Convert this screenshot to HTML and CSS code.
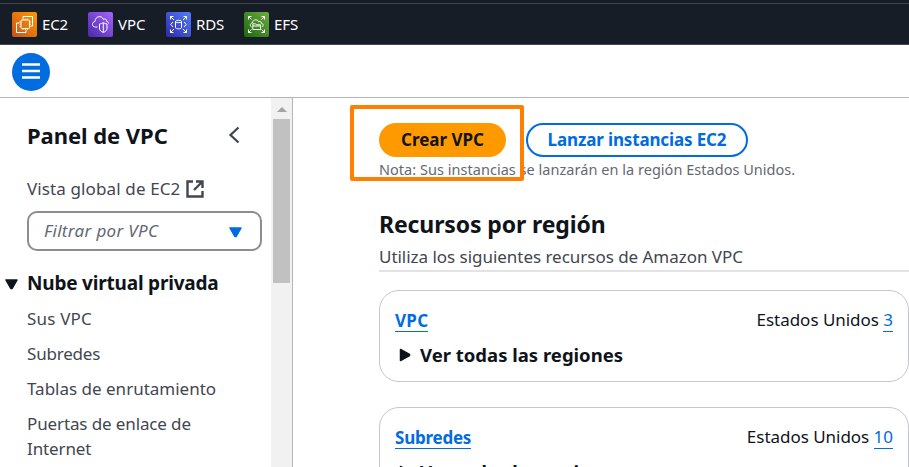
FILE: index.html
```html
<!DOCTYPE html>
<html lang="es">
<head>
<meta charset="utf-8">
<title>Panel de VPC</title>
<link rel="stylesheet" href="styles.css">
</head>
<body>
<nav class="favorites">
  <a class="fav fav-ec2"><svg class="service" viewBox="0 0 25 25"><defs><linearGradient id="g1" x1="0" y1="1" x2="1" y2="0"><stop stop-color="#c8511b"/><stop offset="1" stop-color="#f90"/></linearGradient></defs><rect width="25" height="25" rx="2" fill="url(#g1)"/><g fill="none" stroke="#fff"><rect x="9" y="8" width="8.500" height="8.500" rx="1"/><path d="M11 6.500V8M13.300 6.500V8M15.600 6.500V8M11 16.500V18M13.300 16.500V18M15.600 16.500V18M7.500 10H9M7.500 12.300H9M7.500 14.500H9M17.500 10H19M17.500 12.300H19M17.500 14.500H19" stroke-width=".8"/><path d="M11 6.500V4.500H20.500V14H19M7.500 11H4.500V20.500H14V18"/></g></svg><span>EC2</span></a>
  <a class="fav fav-vpc"><svg class="service" viewBox="0 0 25 25"><defs><linearGradient id="g2" x1="0" y1="1" x2="1" y2="0"><stop stop-color="#4d27a8"/><stop offset="1" stop-color="#a166ff"/></linearGradient></defs><rect width="25" height="25" rx="2" fill="url(#g2)"/><g fill="none" stroke="#fff"><path d="M9.500 15H7.500C3.500 15 3.500 10 7 9.500C7 4 14 3 15.500 7.500C17.500 6 19 8 18.500 9.300C20 9.500 20.500 10.500 20.500 11.500"/><path d="M15.300 10.500C14 11.500 13 11.700 11.500 12V16C11.500 18.500 13 19.500 15.300 20.500C17.600 19.500 19 18.500 19 16V12C17.600 11.700 16.600 11.500 15.300 10.500Z"/><path d="M15.300 11V20"/></g></svg><span>VPC</span></a>
  <a class="fav fav-rds"><svg class="service" viewBox="0 0 25 25"><defs><linearGradient id="g3" x1="0" y1="1" x2="1" y2="0"><stop stop-color="#2e27ad"/><stop offset="1" stop-color="#527fff"/></linearGradient></defs><rect width="25" height="25" rx="2" fill="url(#g3)"/><g fill="none" stroke="#fff"><path d="M4.500 7.500V4.500H7.500M17.500 4.500H20.500V7.500M4.500 17.500V20.500H7.500M17.500 20.500H20.500V17.500M4.500 4.500L8 8M20.500 4.500L17 8M4.500 20.500L8 17M20.500 20.500L17 17M7 10L4.700 12.500L7 15M18 10L20.300 12.500L18 15"/><ellipse cx="12.500" cy="9.500" rx="3" ry="1.200"/><path d="M9.500 9.500V15.700C9.500 17.200 15.500 17.200 15.500 15.700V9.500"/></g></svg><span>RDS</span></a>
  <a class="fav fav-efs"><svg class="service" viewBox="0 0 25 25"><defs><linearGradient id="g4" x1="0" y1="1" x2="1" y2="0"><stop stop-color="#1b660f"/><stop offset="1" stop-color="#6cae3e"/></linearGradient></defs><rect width="25" height="25" rx="2" fill="url(#g4)"/><g fill="none" stroke="#fff"><path d="M4.500 7.500V4.500H7.500M17.500 4.500H20.500V7.500M4.500 17.500V20.500H7.500M17.500 20.500H20.500V17.500M4.500 4.500L7.500 7.500M20.500 4.500L17.500 7.500M4.500 20.500L7.500 17.500M20.500 20.500L17.500 17.500"/><path d="M7.500 15C5.500 14 6 11.300 8.300 11C8.800 7.200 13.500 6.800 14.700 9.800C16.300 9 17.200 10 17.200 11.200C19.700 11.500 19.700 14.500 17.800 15"/><path d="M8.800 17.500V11.800H11.500L12.500 12.800H16.500V17.500ZM9 14H16.500"/></g></svg><span>EFS</span></a>
</nav>
<header class="toolbar"><button class="menu" aria-label="Menú"><svg viewBox="0 0 38 38"><path d="M10 11.500H28M10 18H28M10 24.500H28" stroke="#fff" stroke-width="2.500"/></svg></button></header>
<div class="layout">
  <aside class="sidebar">
    <div class="panel">
      <div class="panel-head"><h2>Panel de VPC</h2><svg class="chevron" viewBox="0 0 12 18"><path d="M10.500 1.500L2.500 9L10.500 16.500" fill="none" stroke="#424650" stroke-width="2.300"/></svg></div>
      <a class="global"><span>Vista global de EC2</span><svg class="external" viewBox="0 0 18 18"><path d="M7 1.500H1.500V16.500H16.500V11M10 1.500H16.500V8M16 2L8 10" fill="none" stroke="#424650" stroke-width="2.400"/></svg></a>
      <div class="filter"><span>Filtrar por VPC</span><svg class="caret" viewBox="0 0 13 11"><path d="M1 1H12L7.200 9.500H5.800Z" fill="#006ce0" stroke="#006ce0" stroke-width="1.500" stroke-linejoin="round"/></svg></div>
      <div class="section"><svg class="tri" viewBox="0 0 13 11"><path d="M1 1H12L7.200 9.500H5.800Z" fill="#0f141a" stroke="#0f141a" stroke-width="1.500" stroke-linejoin="round"/></svg><h3>Nube virtual privada</h3></div>
      <ul class="links"><li class="sus">Sus VPC</li><li class="sub">Subredes</li><li>Tablas de enrutamiento</li><li class="gateways">Puertas de enlace de Internet</li></ul>
    </div>
    <div class="scrollbar"><div class="arrow"></div><div class="thumb"></div></div>
  </aside>
  <main class="content">
    <div class="highlight"></div>
    <div class="actions"><button class="btn primary">Crear VPC</button><button class="btn outline">Lanzar instancias EC2</button></div>
    <p class="note">Nota: Sus instancias se lanzarán en la región Estados Unidos.</p>
    <h1>Recursos por región</h1>
    <p class="desc">Utiliza los siguientes recursos de Amazon VPC</p>
    <section class="card">
      <div class="card-row"><a class="name vpc">VPC</a><div class="region"><span>Estados Unidos</span> <a>3</a></div></div>
      <div class="expand"><svg class="play" viewBox="0 0 12 14"><path d="M1.500 1.500L10.500 6.400V7.600L1.500 12.500Z" fill="#0f141a" stroke="#0f141a" stroke-width="1.500" stroke-linejoin="round"/></svg><span>Ver todas las regiones</span></div>
    </section>
    <section class="card">
      <div class="card-row"><a class="name subnets">Subredes</a><div class="region"><span>Estados Unidos</span> <a>10</a></div></div>
      <div class="expand"><svg class="play" viewBox="0 0 12 14"><path d="M1.500 1.500L10.500 6.400V7.600L1.500 12.500Z" fill="#0f141a" stroke="#0f141a" stroke-width="1.500" stroke-linejoin="round"/></svg><span>Ver todas las regiones</span></div>
    </section>
  </main>
</div>
</body>
</html>
```

FILE: styles.css
```css
* { box-sizing: border-box; }
body { margin: 0; width: 909px; height: 467px; overflow: hidden; background: #fff; color: #0f141a; font-family: "Noto Sans", "Open Sans", sans-serif; font-size: 17px; }
h1, h2, h3, p, ul { margin: 0; padding: 0; }
button { font-family: inherit; padding: 0; }
svg { display: block; flex: none; }
.favorites { display: flex; height: 45px; padding: 8px 12px 0; background: linear-gradient(#424650, #424650) 0 3px / 100% 1px no-repeat #161d26; border-bottom: 1px solid #424650; }
.fav { display: flex; align-items: center; gap: 5px; height: 33px; color: #fff; font-size: 15px; }
.fav span { margin-top: -1px; letter-spacing: -0.1px; }
.fav-ec2 { width: 76px; }
.fav-vpc { width: 78px; }
.fav-rds { width: 78px; }
.service { width: 25px; height: 25px; }
.toolbar { height: 53px; padding: 8px 12px; border-bottom: 1px solid #b4b4bb; }
.menu { display: block; width: 38px; height: 38px; border: 0; border-radius: 50%; background: #006ce0; }
.layout { display: flex; height: 369px; overflow: hidden; }
.sidebar { display: flex; flex: none; width: 293px; border-right: 1px solid #b4b4bb; }
.panel { width: 271px; padding: 0 9px 0 27px; color: #424650; }
.panel-head { display: flex; justify-content: space-between; align-items: center; height: 30px; margin-top: 22px; padding-right: 22px; }
.panel-head h2 { font-size: 22px; line-height: 30px; letter-spacing: -0.05px; color: #0f141a; }
.chevron { width: 12px; height: 18px; }
.global { display: flex; align-items: center; gap: 6px; height: 24px; margin-top: 26px; letter-spacing: 0.12px; }
.external { width: 18px; height: 18px; margin-top: 1px; }
.filter { display: flex; align-items: center; justify-content: space-between; height: 40px; margin-top: 11px; padding: 0 18px 0 15px; border: 2px solid #8c8c94; border-radius: 10px; color: #656871; font-style: italic; letter-spacing: 0.33px; }
.filter span { margin-top: -2px; }
.caret, .tri { width: 13px; height: 11px; }
.caret { margin-top: 2px; }
.section { display: flex; align-items: center; gap: 9px; height: 28px; margin: 18px 0 0 -22px; color: #0f141a; }
.section h3 { font-size: 19px; line-height: 28px; letter-spacing: -0.2px; white-space: nowrap; }
.tri { margin-top: 2px; }
.links { list-style: none; margin-top: 9px; line-height: 25px; }
.links li { margin-bottom: 10px; width: 200px; }
.links .sus { letter-spacing: 0.2px; }
.links .sub { letter-spacing: -0.2px; }
.links .gateways { letter-spacing: -0.12px; }
.scrollbar { width: 21px; padding: 0 2px; background: #f1f1f1; }
.arrow { width: 0; height: 0; margin: 9px auto 7px; border: 5px solid transparent; border-top: 0; border-bottom-color: #a3a3a3; }
.thumb { width: 17px; height: 164px; background: #c1c1c1; }
.content { position: relative; width: 616px; padding: 25px 0 0 86px; }
.highlight { position: absolute; left: 56.500px; top: 6.500px; width: 174px; height: 76px; border: 4px solid #ff8000; border-radius: 2px; z-index: 2; }
.actions { display: flex; gap: 20px; }
.btn { height: 34px; padding-bottom: 1px; border-radius: 17px; font-size: 17px; font-weight: 700; }
.primary { width: 127px; border: 0; background: #ff9900; color: #0f141a; }
.outline { width: 222px; border: 2px solid #006ce0; background: #fff; color: #006ce0; letter-spacing: -0.14px; }
.note { margin-top: 2px; font-size: 14.5px; line-height: 20px; letter-spacing: 0.03px; color: #656871; }
.content h1 { margin-top: 27px; font-size: 23px; line-height: 36px; letter-spacing: -0.12px; }
.desc { height: 30px; line-height: 29px; border-bottom: 2px solid #e3e3e5; color: #424650; letter-spacing: -0.03px; }
.card { height: 92px; margin: 18px 0 25px; padding: 17px 15px 0; border: 1px solid #c6c6cd; border-radius: 20px; }
.card-row { display: flex; justify-content: space-between; height: 26px; line-height: 24px; }
.card a { color: #006ce0; border-bottom: 1px solid #006ce0; }
.card .name { height: 24px; line-height: 25px; font-weight: 700; }
.card .vpc { letter-spacing: 0.3px; }
.card .subnets { letter-spacing: -0.23px; }
.region { letter-spacing: -0.03px; }
.expand { display: flex; align-items: center; gap: 9px; height: 28px; padding-left: 4px; margin-top: 6px; font-size: 18.5px; font-weight: 700; }
.play { width: 12px; height: 14px; margin-top: 2px; }
```
